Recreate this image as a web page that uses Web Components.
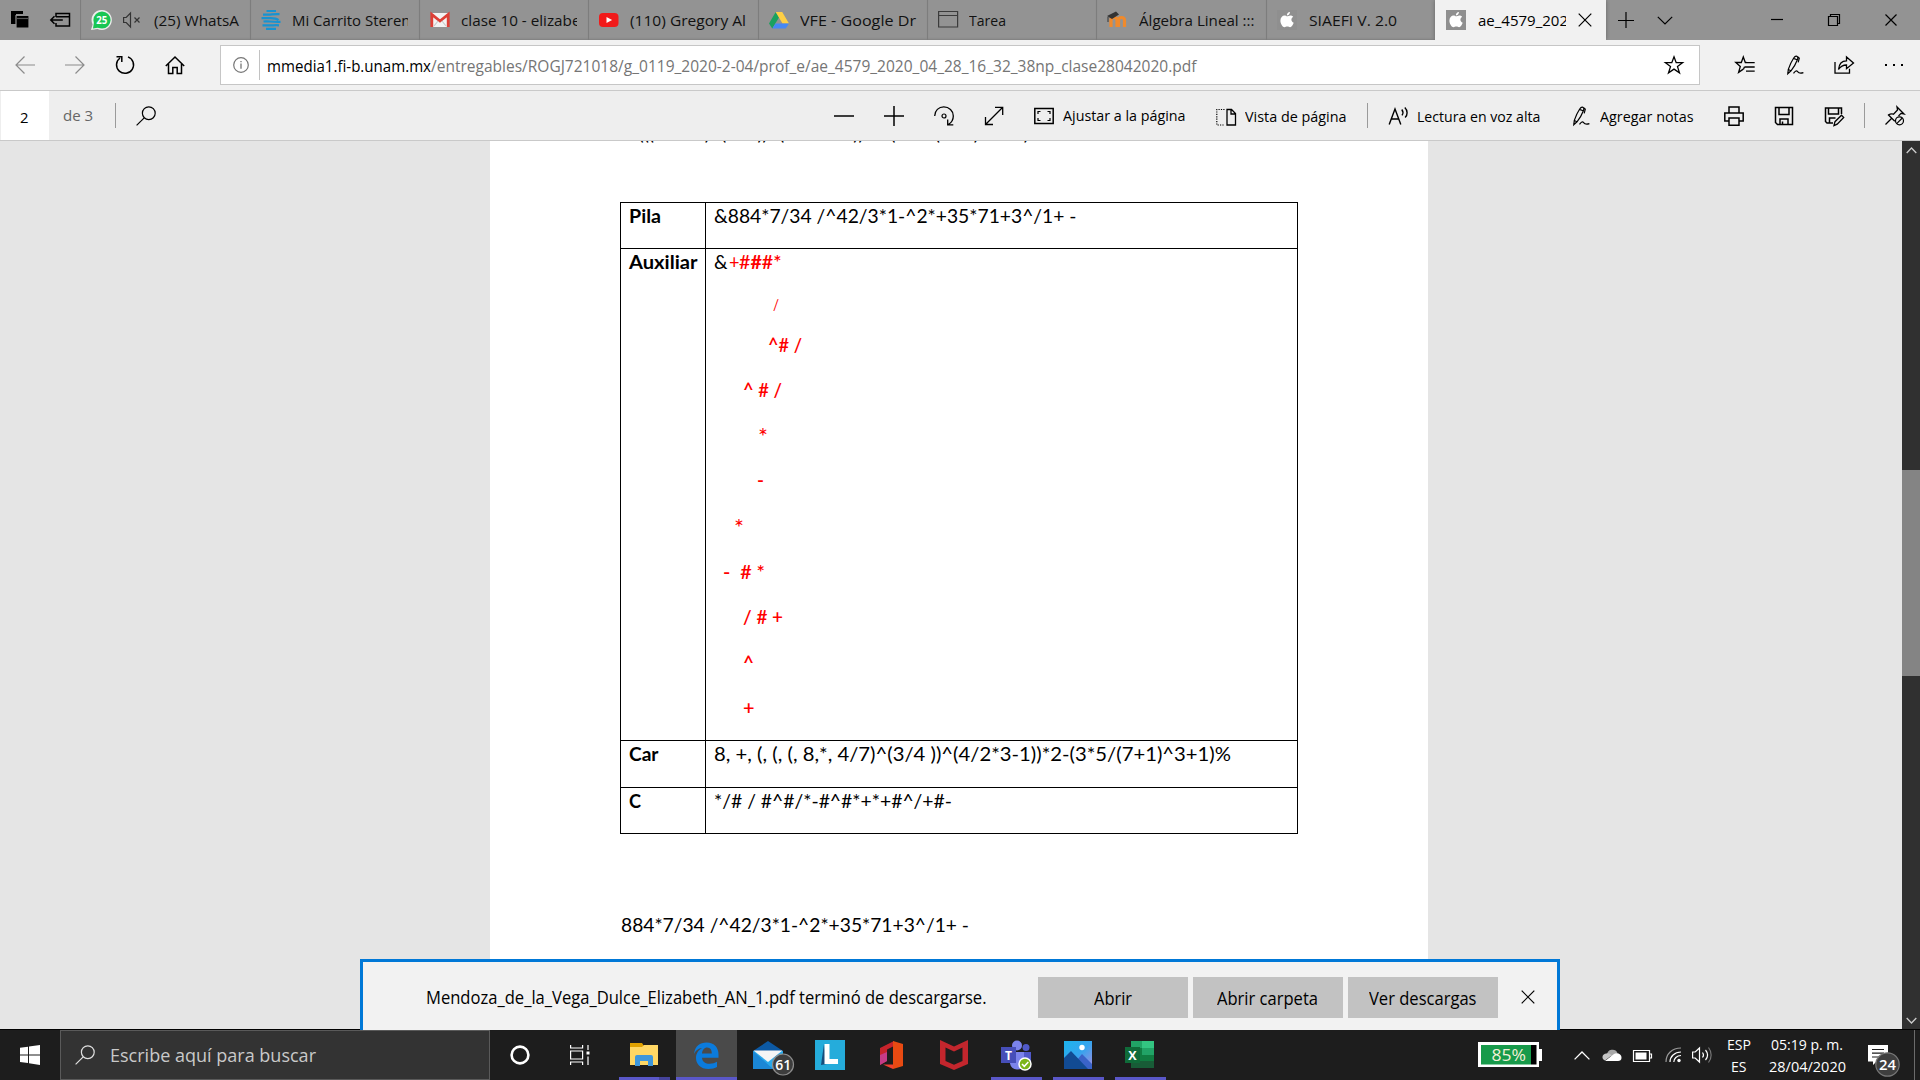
<!DOCTYPE html>
<html lang="es">
<head>
<meta charset="utf-8">
<title>ae_4579_2020</title>
<style>
html,body{margin:0;padding:0;width:1920px;height:1080px;overflow:hidden;background:#e5e5e5}
body{font-family:"Open Sans","Noto Sans",sans-serif;font-size:15px}
</style>
</head>
<body>
<desktop-screen></desktop-screen>
<script>
const PEN = '<path d="M12.3 1.2c1.500.3 1.900 1.400 1.200 3.300-1.400 3.700-3.300 7.300-6.500 11.300l-3.200 3 .5-4.400C6 9.700 8 5.500 9.700 3c.8-1.200 1.600-1.900 2.600-1.800zM9.500 3.400l3.600 1.400M4.300 14.500l2.600 1.300M14 1.800l1.300 1.400-1.100 4.200"/><path d="M9.500 18.400c1.800-2.700 3.200-3 4.100-1.800 1 1.400 2 2.200 5.800 1"/>';
const APPLE = '<rect width="20" height="20" fill="#8f8f8f"/><path fill="#fff" d="M13 2c0 2-1.500 3.400-3.200 3.400C9.800 3.600 11.200 2.200 13 2zM10.200 6.300c.8 0 1.800-.9 3.200-.9 1.300 0 2.200.6 2.800 1.400-2.600 1.600-2.200 5 .5 6-.7 2-2.100 4.400-3.600 4.400-1.100 0-1.500-.7-2.800-.7s-1.800.7-2.800.7C5.600 17.200 3.400 13.600 3.400 10.700c0-3.200 2-5.200 4.200-5.200 1.200 0 2 .8 2.600.8z"/>';
const ICONS = {
tabsaside:[20,20,'<path fill="#000" stroke="none" d="M0 1h12v3H5v10H0z"/><path fill="#000" stroke="#949494" d="M5 5.500h13v12.500H5z"/><path stroke="#555" d="M6 8.500h11"/>'],
setaside:[20,20,'<path d="M6 7V3.500h13.500v12.500H6v-3M6 6.700h13.500M.8 10h12M4.500 6.300L.8 10l3.700 3.700" stroke-width="1.500"/>'],
whatsapp:[21,20,'<path fill="#ededed" stroke="none" d="M11 0a10 10 0 1 1-4.500 19L0 20l1.600-5.500A10 10 0 0 1 11 0z"/><circle cx="11" cy="10" r="8.600" fill="#19c654" stroke="none"/><path fill="#19c654" stroke="none" d="M3 12l-1 6.500 6-1z"/><text x="10.700" y="13.600" font-size="10" font-weight="700" fill="#fff" stroke="none" text-anchor="middle" textLength="11" lengthAdjust="spacingAndGlyphs">25</text>'],
mute:[18,20,'<path stroke="#333" d="M.6 7.500h2.600L7.500 3v14l-4.300-4.500H.6zM11.500 7.500l5 5M16.500 7.500l-5 5"/>'],
steren:[20,20,'<g stroke="#1693d2" stroke-width="2.200" fill="none"><path d="M5.500 1h9.500M2 4.600h6c3 0 4-.6 10.500-.4M.5 8.200h6.500c4-.2 8-.4 10.500 1.800M2.500 11.500c4-.8 8 .7 17 .3M1.500 15.300h7c3 .2 5-.3 9.500 0M5 18.900h10"/></g>'],
gmail:[20,20,'<path fill="#f3f3f3" stroke="none" d="M1 3h18v14H1z"/><path stroke="#dd3f36" stroke-width="2.800" d="M1.800 17V4.500L10 11l8.200-6.500V17"/><path stroke="#c9c9c9" d="M4 16l4-5M16 16l-4-5"/>'],
youtube:[20,20,'<rect x="0" y="3" width="19.500" height="14" rx="4" fill="#f11a1a" stroke="none"/><path fill="#fff" stroke="none" d="M7.500 7l5.600 3-5.600 3z"/>'],
drive:[20,20,'<g stroke="none"><path fill="#1aa15f" d="M6.700 2L0 13.500 3.300 18.500 10 7.500z"/><path fill="#ffcf44" d="M6.700 2h6.500L20 13.500h-6.500z"/><path fill="#4688f4" d="M6.500 13.500H20l-3.300 5H3.300z"/></g>'],
page:[20,20,'<path stroke="#3b3b3b" d="M.6 1.500h19V17H.6zM.6 5.500h19"/>'],
moodle:[20,20,'<path stroke="#f08a2c" stroke-width="3.200" d="M4 17V10.500c0-4 6-4 6 0V17M11.500 17V10.500c0-4 6-4 6 0V17"/><path fill="#333" stroke="none" d="M0 6l9-4.500L12 4.500 5 9z"/><path stroke="#444" d="M1 7v5"/>'],
apple:[20,20,'<g stroke="none">'+APPLE+'</g>'],
x14:[14,14,'<path d="M.7.7l12.600 12.600M13.300.7L.7 13.300"/>'],
x12:[12,12,'<path d="M.5.5l11 11M11.500.5l-11 11"/>'],
plus16:[16,16,'<path d="M8 0v16M0 8.500h16"/>'],
down:[16,9,'<path d="M.8.8L8 8 15.200.8"/>'],
min:[12,12,'<path d="M0 5.500h12"/>'],
restore:[12,12,'<path d="M.5 2.500h9v9h-9zM2.500 2.500v-2h9v9h-2"/>'],
back:[20,20,'<path stroke="#8c8c8c" d="M20 10H1M9.500 1.500L1 10l8.500 8.500"/>'],
fwd:[20,20,'<path stroke="#8c8c8c" d="M0 10h19M10.500 1.500L19 10l-8.500 8.500"/>'],
refresh:[20,20,'<path stroke-width="1.500" d="M13 1.900A8.500 8.500 0 1 1 5 3M6.800 7V1.800H1.500"/>'],
home:[20,20,'<path stroke-width="1.500" d="M.8 11L10 2l9.200 9M3.500 9v9.500h4.300v-6h4.400v6h4.300V9"/>'],
info:[16,16,'<circle cx="8" cy="8" r="7.300" stroke="#767676"/><path stroke="#767676" stroke-width="1.300" d="M8 6.600v5.200M8 3.900v1.400"/>'],
star:[20,20,'<path stroke-width="1.300" d="M10 1.800l2.200 5.900h6.400l-5.100 3.900 2 6.200-5.500-3.700-5.500 3.700 2-6.200-5.100-3.900h6.400z"/>'],
favs:[20,20,'<path stroke-width="1.300" d="M11.500 7.500h-1.200L8.300 2 6.300 7.500H.8l4.500 3.900-1.700 6 4.700-3.300M8.500 14.200l1-2.500M11.500 7.700h8.200M9.700 12h10M11 16.200h8.700"/>'],
pen:[20,20,PEN],
share:[20,20,'<path stroke-width="1.300" d="M1 7v11.200h14.500v-4.500M4.500 14.500C5 9 8 5.800 12.500 5.800V2l7 6-7 5.700V10c-3.500 0-5.800 1.200-8 4.500z"/>'],
dots:[20,20,'<path fill="#000" stroke="none" d="M1 9h2v2H1zM9 9h2v2H9zM17 9h2v2h-2z"/>'],
search:[20,20,'<circle cx="12.800" cy="7.200" r="6.400"/><path d="M8.200 11.800L.6 19.400"/>'],
minus:[20,20,'<path stroke-width="1.500" d="M0 10h20"/>'],
plus:[20,20,'<path stroke-width="1.500" d="M0 10h20M10 0v20"/>'],
rotate:[20,20,'<path stroke-width="1.300" d="M.7 10C.7 4.500 4.800.9 9.800.9c5.200 0 9.500 4 9.500 9 0 3.800-2 6.800-5 8.600M13.700 13.500v5.400h5.600"/><circle cx="10" cy="10" r="2"/>'],
expand:[20,20,'<path stroke-width="1.300" d="M2 18L18.500 1.500M11 1.300h7.700V9M1.500 11v7.500H9"/>'],
fit:[20,20,'<path stroke-width="1.500" d="M.8 2.500h18.400v15H.8z"/><path d="M4 8V5.500h2.500M13.500 5.500H16V8M16 12v2.500h-2.500M6.500 14.500H4V12"/>'],
doc:[20,20,'<path stroke-width="1.300" d="M11 3.500h4.500l4 4V19H11zM15 3.500V8h4.500"/><path stroke-dasharray="1.200 1.200" d="M8.500 3.500H.8V19h8"/>'],
read:[20,20,'<path stroke-width="1.400" d="M1.200 18.500L7 3l5.800 15.500M3.100 13h7.800M13.800 3.500c1.500 2 1.500 4 .2 5.800M16.800 1.500c3 3 3 7.500.3 10"/>'],
print:[20,20,'<path stroke-width="1.500" d="M5 7V1h10v6M5 15H.8V7h18.400v8H15M5 12h10v7.200H5z"/>'],
save:[20,20,'<path stroke-width="1.500" d="M1.500 1.500h17v17h-15l-2-2zM5 1.500v7h10v-7M6 18.500v-5.500h8v5.500M8.500 15.500v3"/>'],
saveas:[20,20,'<path stroke-width="1.500" d="M9 17H3l-1.500-1.500V2h16v6M4.500 2v6h10V2M5.500 17v-5h6"/><path stroke-width="1.300" d="M10 19.500l1-3.800 6.500-6.500 2.200 2.200-6.500 6.700z"/>'],
pin:[20,20,'<path stroke-width="1.300" d="M.5 18.500l6-6M3 8.500l6.800 6.800M3.500 9c2-1.400 3.500-1.300 5-.8l4-4.200-.5-3 7 7-3-.6-2.500 2.600"/><circle cx="14.500" cy="14.800" r="4"/><path d="M11.700 17.600l5.600-5.600"/>'],
win:[20,20,'<path fill="#fff" stroke="none" d="M0 2.800L8 1.700v7.700H0zM9 1.500L20 0v9.400H9zM0 10.400h8v7.700l-8-1.100zM9 10.400h11V20L9 18.300z"/>'],
cortana:[20,20,'<circle cx="10" cy="10" r="8.400" stroke="#fff" stroke-width="2.600"/>'],
taskview:[20,20,'<path stroke="#fff" stroke-width="1.200" d="M.6 0v3h12V0M.6 20v-3h12v3M.6 6h12v8H.6zM18 0v5M18 11.500V20"/><path fill="#fff" stroke="none" d="M16.500 6.500h3v3h-3z"/>'],
folder:[62,50,'<g stroke="none"><path fill="#e0a100" d="M17 13h12l2 3v4H17z"/><path fill="#ffd764" d="M17 17h12l2-2h14v20H17z"/><path fill="#3e97dc" d="M22 36V27q0-2 2-2h14q2 0 2 2v9h-5v-5h-8v5z"/><path fill="#5a57c8" d="M6 47h40v3H6z"/><path fill="#45439b" d="M46 47h11v3H46z"/></g>'],
edge:[62,50,'<path fill="#4a4a4a" stroke="none" d="M1 0h61v50H1z"/><path fill="#0b7bdc" stroke="none" d="M19 24C20 16 25 12.500 31.500 12.500c8 0 12 5.500 12 12v3.300H27c.3 4.200 3.500 6 7.500 6 3 0 5.500-.8 7.500-2v5.200c-2 1.300-5.200 2-8.500 2-8 0-12.500-5-12.500-11 0-4.500 2.500-8 6.300-10C23 18.200 20.500 21 19 24zM27 23.500h9.800c0-4-1.500-6-4.600-6-3 0-4.800 2.500-5.200 6z"/><path fill="#5a57c8" stroke="none" d="M1 47h61v3H1z"/>'],
mail:[62,50,'<g stroke="none"><path fill="#0c59a4" d="M16 21L31 11l15 10v3H16z"/><path fill="#28a8ea" d="M16 21h30v18H16z"/><path fill="#f5f5f5" d="M16.500 20.500h29L31 32z"/><path fill="#1b87d6" d="M16 39V21l20 18z"/></g><circle cx="46" cy="34.500" r="10.500" fill="#3d3d3d" stroke="#8d8d8d"/><text x="46.300" y="40" font-size="15" font-weight="600" fill="#fff" stroke="none" text-anchor="middle" textLength="16" lengthAdjust="spacingAndGlyphs">61</text>'],
lapp:[62,50,'<path fill="#25acdb" stroke="none" d="M16 10h30v30H16z"/><path fill="#154d7c" stroke="none" d="M25 14l-3 21 6-1z"/><path stroke="#fff" stroke-width="5" d="M28 14v17.500h11"/>'],
office:[62,50,'<g stroke="none"><path fill="#c5232b" d="M19 18l14-7v5l-7 3.500V31l-7 4z"/><path fill="#c43b87" d="M19 35V25l7-3v9z"/><path fill="#e84a12" d="M32 11l10 3v22l-10 3z"/><path fill="#f04030" d="M22 34.500h10V39z"/></g>'],
mcafee:[62,50,'<path fill="#c3262d" stroke="none" d="M17 10l14 6.500L45 10v24l-14 6-14-6zM22.500 17.500V31l8.500 3.800 8.500-3.800V17.500L31 21.500z"/>'],
teams:[62,50,'<g stroke="none"><circle cx="32" cy="15.500" r="5" fill="#7b83eb"/><circle cx="41" cy="17.500" r="3.500" fill="#5059c9"/><path fill="#5059c9" d="M36 22h10v11q-3 5-8 4z"/><path fill="#7b83eb" d="M25 22h14v12q-2 6-7 5.500-6-.5-7-6z"/><path fill="#464eb8" d="M16 17h15v16H16z"/></g><text x="23.500" y="30" font-size="12" font-weight="700" fill="#fff" stroke="none" text-anchor="middle">T</text><circle cx="40" cy="34" r="6" fill="#7cb518" stroke="#fff" stroke-width="1.500"/><path stroke="#fff" stroke-width="1.500" d="M37 34l2.300 2.300 4-4.300"/><path fill="#5a57c8" stroke="none" d="M6 47h51v3H6z"/>'],
photos:[62,50,'<defs><linearGradient id="p" x2="1" y2="1"><stop stop-color="#1cb4ec"/><stop offset=".5" stop-color="#35a4ee"/><stop offset="1" stop-color="#a68be0"/></linearGradient></defs><g stroke="none"><path fill="url(#p)" d="M17 11h28v28H17z"/><path fill="#3a63c8" d="M30 30l5-6 10 10v5H30z"/><path fill="#124b93" d="M17 28l7-7L41 39H17z"/><circle cx="35" cy="17.500" r="2.700" fill="#fff"/><path fill="#5a57c8" d="M6 47h51v3H6z"/></g>'],
excel:[62,50,'<g stroke="none"><path fill="#21a366" d="M22 11h11v7H22z"/><path fill="#33c481" d="M33 11h12v7H33z"/><path fill="#107c41" d="M22 18h11v7H22z"/><path fill="#21a366" d="M33 18h12v7H33z"/><path fill="#107c41" d="M22 25h23v7H22z"/><path fill="#185c37" d="M22 31h23v7H22z"/><path fill="#0f6b39" d="M16 17h15v16H16z"/></g><text x="23.300" y="30" font-size="12.500" font-weight="700" fill="#fff" stroke="none" text-anchor="middle">X</text><path fill="#5a57c8" stroke="none" d="M6 47h51v3H6z"/>'],
batt85:[64,26,'<path fill="#fff" stroke="none" d="M0 0h61v7h3v12h-3v6H0z"/><path fill="#179a4a" stroke="none" d="M3 3h50v19.500H3z"/><path fill="#000" stroke="none" d="M53 3h5.500v19.500H53z"/><text x="13.500" y="18.700" font-size="17" fill="#f4f0d8" stroke="none" textLength="34.500" lengthAdjust="spacingAndGlyphs">85%</text>'],
up:[16,9,'<path stroke="#fff" stroke-width="1.300" d="M.6 8.400L8 1l7.400 7.400"/>'],
cloud:[20,14,'<g stroke="none"><path fill="#a8a8a8" d="M5 7a5.500 5.500 0 0 1 10.500-2L10 9z"/><path fill="#c4c4c4" d="M3 12.500C-1 11 0 5.500 4.500 5.500c2-.5 4 .5 5 2z"/><path fill="#fff" d="M3 13l9-7c3-2 8 .5 7.500 4 0 2-1.500 3-3.500 3z"/></g>'],
batt:[19,12,'<path stroke="#fff" d="M.5.5h16v11H.5zM17 4h1.500v4H17"/><path fill="#fff" stroke="none" d="M2.500 2.500h11v7h-11z"/>'],
wifi:[17,16,'<g stroke="#fff" stroke-width="1.200"><path stroke="#9a9a9a" d="M1 15C1 7 7 1 16 1"/><path d="M5 15C5 9.500 9.500 5 16 5M8.800 15c0-3.500 3-6.500 7.200-6.500"/></g><circle cx="14" cy="13.500" r="1.700" fill="#fff" stroke="none"/>'],
speaker:[20,18,'<path stroke="#fff" stroke-width="1.200" d="M.6 6h2.600L7.500 2v14l-4.300-4H.6zM10.500 6.500c1.200 1.500 1.200 3.500 0 5M13.500 4c2.500 3 2.500 7 0 10"/><path stroke="#777" d="M16.500 1.500c3.500 4.500 3.500 10.500 0 15"/>'],
notif:[34,34,'<path fill="#fff" stroke="none" d="M0 2h20v16.500H8.500L5 22v-3.500H0z"/><path stroke="#1d1d1d" stroke-width="1.200" d="M4 6.500h12M4 10.200h12M4 14h8"/><circle cx="19.500" cy="21.500" r="11.700" fill="#3f3f3f" stroke="#777"/><text x="19.500" y="26.800" font-size="14.500" font-weight="600" fill="#fff" stroke="none" text-anchor="middle" textLength="17" lengthAdjust="spacingAndGlyphs">24</text>'],
sup:[11,7,'<path stroke="#ccc" stroke-width="1.300" d="M.7 6L5.500 1l4.800 5"/>'],
sdown:[11,7,'<path stroke="#ccc" stroke-width="1.300" d="M.7 1l4.800 5 4.800-5"/>']
};

class UiIcon extends HTMLElement{
  constructor(){super();this.attachShadow({mode:'open'});}
  connectedCallback(){
    const [w,h,body]=ICONS[this.getAttribute('name')];
    this.shadowRoot.innerHTML=`<style>:host{display:block;flex:none;width:${w}px;height:${h}px;color:#000}svg{display:block;overflow:visible;font-family:"Open Sans",sans-serif}</style><svg width="${w}" height="${h}" viewBox="0 0 ${w} ${h}" fill="none" stroke="var(--ink,#000)" stroke-width="1.200">${body}</svg>`;
  }
}

/* Single line of text condensed or stretched to the width given in "w"; "clip" cuts it short. */
class FitText extends HTMLElement{
  constructor(){super();this.attachShadow({mode:'open'});}
  connectedCallback(){
    const w=+this.getAttribute('w'),c=this.getAttribute('clip');
    this.shadowRoot.innerHTML=`<style>:host{display:block;flex:none;width:${c||w}px;white-space:pre;line-height:24px;height:24px;${c?'overflow:hidden;':''}}span{display:inline-block;transform-origin:0 0}</style><span><slot></slot></span>`;
    const s=this.shadowRoot.querySelector('span'),n=s.getBoundingClientRect().width;
    if(n)s.style.transform=`scaleX(${w/n})`;
  }
}

const define=(name,html)=>{
  const t=document.createElement('template');t.innerHTML=html;
  customElements.define(name,class extends HTMLElement{
    constructor(){super();this.attachShadow({mode:'open'}).appendChild(t.content.cloneNode(true));}
  });
};

define('browser-tab',`<style>
:host{display:flex;align-items:center;flex:none;box-sizing:border-box;width:169.350px;height:40px;border-left:1px solid #7d7d7d;padding-left:10px;gap:11px;color:#111;box-shadow:inset 0 -2px 2px -1px #7e7e7e}
:host([active]){background:#f1f1f1;width:171px;border-color:#f1f1f1;color:#000;box-shadow:0 0 4px #666;clip-path:inset(0 -4px 0 -4px)}
</style><slot></slot>`);

define('tab-strip',`<style>
:host{display:flex;align-items:center;height:40px;background:#939393}
.lead{display:flex;width:80.400px;flex:none;padding-left:11px;box-sizing:border-box;gap:19px;align-items:center}
.tail{display:flex;align-items:center;padding-left:12px}
.wc{display:flex;align-items:center;gap:45px;margin-left:auto;padding-right:23px}
fit-text{margin-top:-1px}
</style>
<div class="lead"><ui-icon name="tabsaside"></ui-icon><ui-icon name="setaside"></ui-icon></div>
<browser-tab><ui-icon name="whatsapp"></ui-icon><ui-icon name="mute"></ui-icon><fit-text w="85" style="margin-left:2px">(25) WhatsA</fit-text></browser-tab>
<browser-tab><ui-icon name="steren"></ui-icon><fit-text w="118.500" clip="116">Mi Carrito Steren</fit-text></browser-tab>
<browser-tab><ui-icon name="gmail"></ui-icon><fit-text w="119.500" clip="115.500">clase 10 - elizabe</fit-text></browser-tab>
<browser-tab><ui-icon name="youtube"></ui-icon><fit-text w="116">(110) Gregory Al</fit-text></browser-tab>
<browser-tab><ui-icon name="drive"></ui-icon><fit-text w="116">VFE - Google Dr</fit-text></browser-tab>
<browser-tab><ui-icon name="page"></ui-icon><fit-text w="37">Tarea</fit-text></browser-tab>
<browser-tab><ui-icon name="moodle"></ui-icon><fit-text w="115.500" style="margin-left:1px">Álgebra Lineal :::</fit-text></browser-tab>
<browser-tab><ui-icon name="apple"></ui-icon><fit-text w="88" style="margin-left:1px">SIAEFI V. 2.0</fit-text></browser-tab>
<browser-tab active><ui-icon name="apple"></ui-icon><fit-text w="90" clip="88" style="margin-left:1px">ae_4579_202</fit-text><ui-icon name="x14" style="margin-left:1px"></ui-icon></browser-tab>
<div class="tail"><ui-icon name="plus16"></ui-icon><ui-icon name="down" style="margin-left:23px"></ui-icon></div>
<div class="wc"><ui-icon name="min"></ui-icon><ui-icon name="restore"></ui-icon><ui-icon name="x12"></ui-icon></div>`);

define('address-row',`<style>
:host{display:flex;align-items:center;height:50px;gap:30px;padding-left:15px;background:#f1f1f1;border-bottom:1px solid #c9c9c9}
.box{display:flex;align-items:center;box-sizing:border-box;width:1480px;height:40px;margin:0 5px;border:1px solid #c6c6c6;background:#fff;padding:0 15px 0 12px}
.div{width:1px;height:30px;background:#c2c2c2;margin:0 7.300px 0 10px}
.box fit-text{margin-top:1px;font-size:15.500px}
.path{color:#757575}.box ui-icon[name=star]{margin-left:auto}
</style>
<ui-icon name="back"></ui-icon><ui-icon name="fwd"></ui-icon><ui-icon name="refresh"></ui-icon><ui-icon name="home"></ui-icon>
<div class="box"><ui-icon name="info"></ui-icon><div class="div"></div><fit-text w="164">mmedia1.fi-b.unam.mx</fit-text><fit-text class="path" w="765.500">/entregables/ROGJ721018/g_0119_2020-2-04/prof_e/ae_4579_2020_04_28_16_32_38np_clase28042020.pdf</fit-text><ui-icon name="star"></ui-icon></div>
<ui-icon name="favs"></ui-icon><ui-icon name="pen" style="margin-left:-1px"></ui-icon><ui-icon name="share"></ui-icon><ui-icon name="dots"></ui-icon>`);

define('tool-group',`<style>:host{display:flex;align-items:center;gap:9px}</style><slot></slot>`);
define('pdf-toolbar',`<style>
:host{display:flex;align-items:center;height:49px;background:#eee;border-bottom:1px solid #c9c9c9}
.pg{display:flex;align-items:center;justify-content:center;box-sizing:border-box;width:48px;height:49px;margin-left:1px;background:#fff;padding:2px 2px 0 0}
.of{margin:-1px 0 0 13.900px;color:#666}
.d{width:1px;height:25px;background:#9a9a9a}
.mid{display:flex;align-items:center;gap:30px;margin-left:678px}
</style>
<div class="pg"><fit-text w="8.500">2</fit-text></div><fit-text class="of" w="30.200">de 3</fit-text>
<div class="d" style="margin:0 20px 0 21.900px"></div><ui-icon name="search"></ui-icon>
<div class="mid"><ui-icon name="minus"></ui-icon><ui-icon name="plus"></ui-icon><ui-icon name="rotate"></ui-icon><ui-icon name="expand"></ui-icon>
<tool-group><ui-icon name="fit"></ui-icon><fit-text w="122.500" style="margin-top:-1px">Ajustar a la página</fit-text></tool-group>
<tool-group style="margin-left:.5px"><ui-icon name="doc"></ui-icon><fit-text w="101.500" style="margin-top:1px">Vista de página</fit-text></tool-group></div>
<div class="d" style="margin:0 20.500px"></div>
<tool-group><ui-icon name="read"></ui-icon><fit-text w="123.400" style="margin-top:1px">Lectura en voz alta</fit-text></tool-group>
<tool-group style="margin-left:30.500px"><ui-icon name="pen" style="margin-left:-1px"></ui-icon><fit-text w="93.500" style="margin:1px 0 0 1px">Agregar notas</fit-text></tool-group>
<div class="mid" style="margin-left:30px"><ui-icon name="print"></ui-icon><ui-icon name="save"></ui-icon><ui-icon name="saveas"></ui-icon></div>
<div class="d" style="margin:0 20px"></div><ui-icon name="pin"></ui-icon>`);

define('doc-line',`<style>:host{display:flex;box-sizing:border-box}</style><slot></slot>`);
define('trace-table',`<style>
:host{display:grid;box-sizing:border-box;width:678px;grid-template-columns:85px 592px;grid-template-rows:46px 492px 47px 46px;border:solid #000;border-width:1px 0 0 1px}
div{box-sizing:border-box;border:solid #000;border-width:0 1px 1px 0;padding:1px 0 0 8px}
b{font-weight:700}
.r{color:#f00}.r fit-text{font-weight:600}
.r .n{font-weight:400}
.r .a{font-size:23px;font-weight:400;margin-top:2px}
</style>
<div><fit-text w="32"><b>Pila</b></fit-text></div><div><fit-text w="362.500">&amp;884*7/34 /^42/3*1-^2*+35*71+3^/1+ -</fit-text></div>
<div><fit-text w="68.500"><b>Auxiliar</b></fit-text></div>
<div>
<doc-line style="height:40.800px"><fit-text w="13.500">&amp;</fit-text><span class="r" style="display:flex;padding-left:1px"><fit-text class="n" w="10.500">+</fit-text><fit-text w="42.500"><span style="font-weight:500">#</span><b>#</b>#*</fit-text></span></doc-line>
<doc-line class="r" style="height:41.900px;padding-left:58.500px;font-size:15px"><fit-text class="n" w="6" style="margin-top:1px">/</fit-text></doc-line>
<doc-line class="r" style="height:45.300px;padding-left:53.500px"><fit-text w="34">^# /</fit-text></doc-line>
<doc-line class="r" style="height:44px;padding-left:29px"><fit-text w="39">^ # /</fit-text></doc-line>
<doc-line class="r" style="height:46.400px;padding-left:44px"><fit-text class="a" w="10">*</fit-text></doc-line>
<doc-line class="r" style="height:44.300px;padding-left:43px"><fit-text w="7">-</fit-text></doc-line>
<doc-line class="r" style="height:47px;padding-left:20px"><fit-text class="a" w="10">*</fit-text></doc-line>
<doc-line class="r" style="height:45.300px;padding-left:9px"><fit-text w="42">-  # *</fit-text></doc-line>
<doc-line class="r" style="height:46px;padding-left:28.500px"><fit-text w="40">/ # +</fit-text></doc-line>
<doc-line class="r" style="height:44.700px;padding-left:29px"><fit-text w="11">^</fit-text></doc-line>
<doc-line class="r" style="padding-left:28.500px"><fit-text w="11.500">+</fit-text></doc-line>
</div>
<div><fit-text w="29.500"><b>Car</b></fit-text></div><div><fit-text w="517">8, +, (, (, (, 8,*, 4/7)^(3/4 ))^(4/2*3-1))*2-(3*5/(7+1)^3+1)%</fit-text></div>
<div><fit-text w="12"><b>C</b></fit-text></div><div><fit-text w="238">*/# / #^#/*-#^#*+*+#^/+#-</fit-text></div>`);

define('pdf-view',`<style>
:host{display:flex;height:888px;background:#e5e5e5;border-bottom:1px solid #000}
.page{box-sizing:border-box;width:938px;height:888px;margin-left:490px;padding-left:130px;background:#fff;overflow:hidden;font-family:Lato,"Open Sans",sans-serif;font-size:19px;color:#000}
.first{display:block;margin:-20px 0 57px -4px}
.last{margin:79px 0 0 .5px}
.sb{display:flex;flex-direction:column;align-items:center;width:18px;margin-left:auto;background:#303030}
.th{width:18px;height:206px;margin:315px 0 auto;background:#848484}
</style>
<div class="page"><fit-text class="first" w="413">8+(((8*4/7)^(3/4))^(4/2*3-1))*2-(3*5/(7+1)^3+1)</fit-text><trace-table></trace-table><fit-text class="last" w="348">884*7/34 /^42/3*1-^2*+35*71+3^/1+ -</fit-text></div>
<div class="sb"><ui-icon name="sup" style="margin-top:6px"></ui-icon><div class="th" style="margin-top:316px"></div><ui-icon name="sdown" style="margin-bottom:5px"></ui-icon></div>`);

define('bar-button',`<style>:host{display:flex;align-items:center;justify-content:center;width:150px;height:41px;background:#c2c2c2;flex:none}</style><slot></slot>`);
define('download-bar',`<style>
:host{position:absolute;left:360px;top:959px;z-index:2;display:flex;align-items:center;box-sizing:border-box;width:1200px;height:71px;border:3px solid #0078d7;border-bottom:0;background:#f2f2f2;padding:3px 0 0 63px;gap:5px;font-size:18px;color:#000}
.msg{margin:-1px 46px 0 0}
ui-icon{margin:-2px 0 0 18px}
</style>
<fit-text class="msg" w="560.500">Mendoza_de_la_Vega_Dulce_Elizabeth_AN_1.pdf terminó de descargarse.</fit-text>
<bar-button><fit-text w="38">Abrir</fit-text></bar-button><bar-button><fit-text w="101">Abrir carpeta</fit-text></bar-button><bar-button><fit-text w="107.500">Ver descargas</fit-text></bar-button><ui-icon name="x14"></ui-icon>`);

define('task-bar',`<style>
:host{display:flex;align-items:center;height:50px;background:#1d1d1d;color:#fff}
.s{display:flex;align-items:center;box-sizing:border-box;width:430px;height:50px;margin:0 20px;border:1px solid #5a5a5a;background:#333;padding-left:14px;gap:15px;font-size:18px;color:#c9c9c9;--ink:#e0e0e0}
.apps{display:flex;margin-left:23px}
.tray{display:flex;align-items:center;margin-left:auto}
.col{display:flex;flex-direction:column;align-items:center;font-size:15px}
.col fit-text{line-height:22px;height:22px}
.end{width:1px;height:50px;background:#6b6b6b;margin:0 5px 0 12px}
</style>
<ui-icon name="win" style="margin-left:20px"></ui-icon>
<div class="s"><ui-icon name="search"></ui-icon><fit-text w="206">Escribe aquí para buscar</fit-text></div>
<ui-icon name="cortana"></ui-icon><ui-icon name="taskview" style="margin-left:40px"></ui-icon>
<div class="apps"><ui-icon name="folder"></ui-icon><ui-icon name="edge"></ui-icon><ui-icon name="mail"></ui-icon><ui-icon name="lapp"></ui-icon><ui-icon name="office"></ui-icon><ui-icon name="mcafee"></ui-icon><ui-icon name="teams"></ui-icon><ui-icon name="photos"></ui-icon><ui-icon name="excel"></ui-icon></div>
<div class="tray"><ui-icon name="batt85"></ui-icon><ui-icon name="up" style="margin-left:32px"></ui-icon><ui-icon name="cloud" style="margin-left:12px"></ui-icon><ui-icon name="batt" style="margin-left:11px;margin-top:1px"></ui-icon><ui-icon name="wifi" style="margin-left:13px"></ui-icon><ui-icon name="speaker" style="margin-left:10px"></ui-icon>
<div class="col" style="margin-left:15px"><fit-text w="24">ESP</fit-text><fit-text w="15.500">ES</fit-text></div>
<div class="col" style="margin-left:18px"><fit-text w="72">05:19 p. m.</fit-text><fit-text w="77">28/04/2020</fit-text></div>
<ui-icon name="notif" style="margin-left:22.500px;margin-top:9px"></ui-icon><div class="end"></div></div>`);

define('desktop-screen',`<style>:host{display:flex;flex-direction:column;position:relative;width:1920px;height:1080px;overflow:hidden}</style>
<tab-strip></tab-strip><address-row></address-row><pdf-toolbar></pdf-toolbar><pdf-view></pdf-view><download-bar></download-bar><task-bar></task-bar>`);
customElements.define('ui-icon',UiIcon);
customElements.define('fit-text',FitText);
</script>
</body>
</html>
